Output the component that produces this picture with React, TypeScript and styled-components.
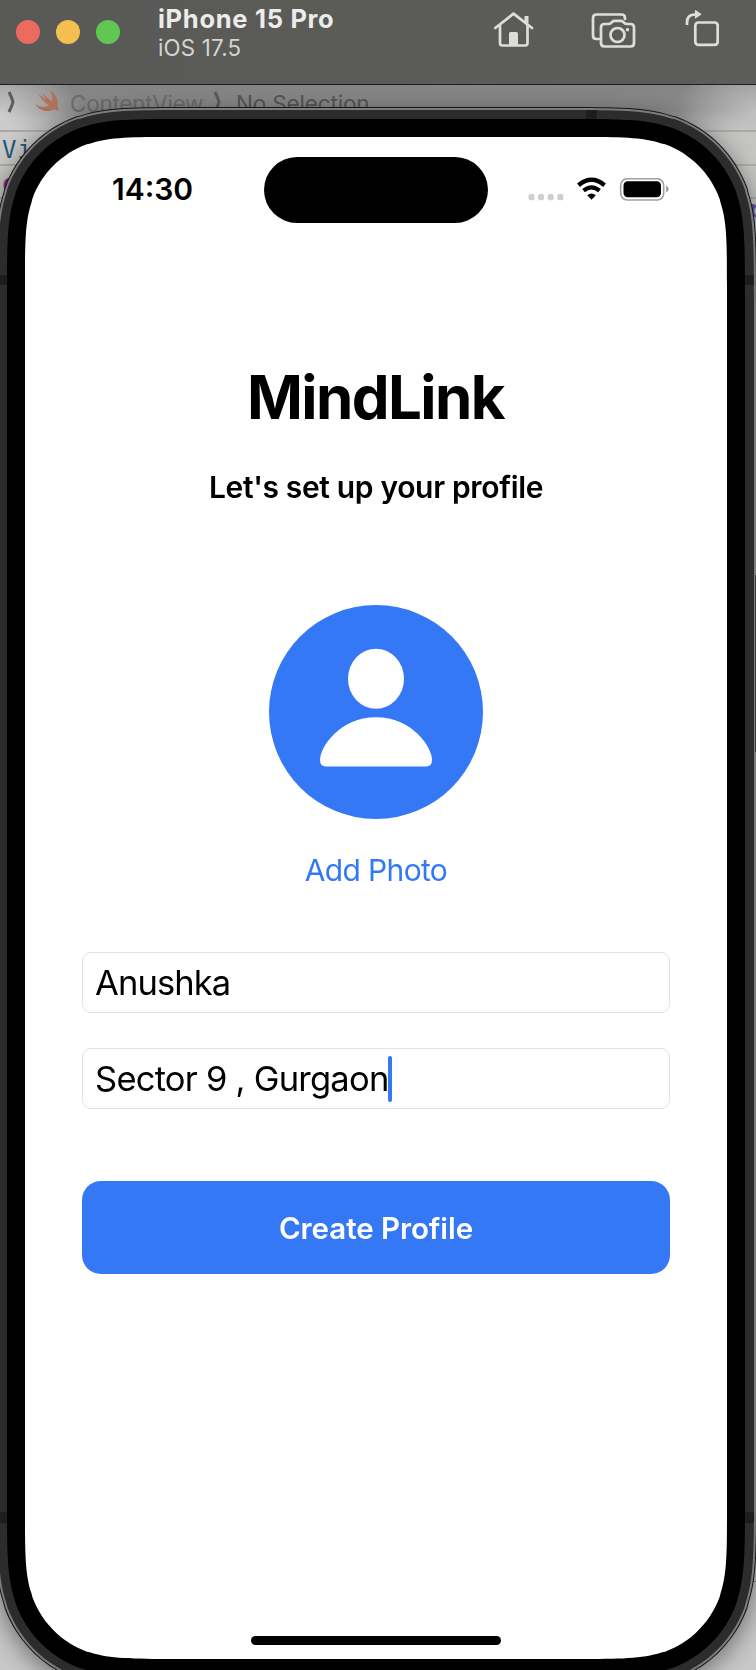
import React from "react";
import styled, { createGlobalStyle } from "styled-components";

const Global = createGlobalStyle`
  *{box-sizing:border-box}
  html,body{margin:0;padding:0;overflow:hidden}
  body{font-family:Inter,"Liberation Sans",sans-serif;background:#c9c9c6}
`;

/* Rounded rectangle with continuous (smoothed) corners. */
const smooth = (w: number, h: number, r: number) => {
  const a = 1.52866 * r, b = 1.08849 * r, c = 0.86841 * r, d = 0.66993 * r, e = 0.06549 * r;
  const f = 0.63149 * r, g = 0.07491 * r, i = 0.37282 * r, j = 0.16905 * r;
  return `path("M${a} 0L${w - a} 0C${w - b} 0 ${w - c} 0 ${w - d} ${e}L${w - f} ${g}C${w - i} ${j} ${w - j} ${i} ${w - g} ${f}L${w - e} ${d}C${w} ${c} ${w} ${b} ${w} ${a}L${w} ${h - a}C${w} ${h - b} ${w} ${h - c} ${w - e} ${h - d}L${w - g} ${h - f}C${w - j} ${h - i} ${w - i} ${h - j} ${w - f} ${h - g}L${w - d} ${h - e}C${w - c} ${h} ${w - b} ${h} ${w - a} ${h}L${a} ${h}C${b} ${h} ${c} ${h} ${d} ${h - e}L${f} ${h - g}C${i} ${h - j} ${j} ${h - i} ${g} ${h - f}L${e} ${h - d}C0 ${h - c} 0 ${h - b} 0 ${h - a}L0 ${a}C0 ${b} 0 ${c} ${e} ${d}L${g} ${f}C${j} ${i} ${i} ${j} ${f} ${g}L${d} ${e}C${c} 0 ${b} 0 ${a} 0Z")`;
};

const Page = styled.div`
  width:756px;height:1670px;overflow:hidden;display:flex;flex-direction:column;
`;
const Toolbar = styled.header`
  flex:none;height:85px;padding:0 37px 0 16px;display:flex;align-items:flex-start;
  background:linear-gradient(90deg,#595a57,#5c5c58);border-bottom:1px solid #1f1c1e;
`;
const Lights = styled.div`display:flex;gap:16px;margin-top:20px;`;
const Light = styled.i<{ $c: string }>`width:24px;height:24px;border-radius:50%;background:${p => p.$c};`;
const Device = styled.div`margin-left:38px;padding-top:3px;flex:1;white-space:nowrap;`;
const DeviceName = styled.div`font-size:25.5px;line-height:31px;font-weight:750;color:#ececea;letter-spacing:.7px;`;
const DeviceOs = styled.div`font-size:22.3px;line-height:28px;color:#d4d4d1;letter-spacing:.2px;`;
const Tools = styled.div`display:flex;padding-top:8px;svg{display:block}`;

const Stage = styled.main`
  flex:1;min-height:0;display:grid;grid-template:1fr / 756px;overflow:hidden;
  > *{grid-area:1 / 1}
`;
const Editor = styled.div`
  display:flex;flex-direction:column;overflow:hidden;
  background:
    radial-gradient(ellipse 80px 60px at 0 30px,rgba(225,225,225,.75),transparent),
    radial-gradient(ellipse 80px 60px at 756px 26px,rgba(225,225,225,.6),transparent),
    linear-gradient(180deg,#858585 0,#898989 24px,#b4b4b2 46px,#c6c6c3 80px,#c8c8c8 100%);
`;
const Crumbs = styled.div`
  flex:none;height:47px;border-bottom:2px solid #a8a8a7;display:flex;align-items:flex-start;
  padding:4px 0 0 6px;font-size:22.5px;line-height:29px;white-space:nowrap;color:#585858;
  svg{display:block}
`;
const Crumb = styled.span<{ $w: number; $faint?: boolean }>`
  width:${p => p.$w}px;color:${p => (p.$faint ? "#6c6c6c" : "#555")};letter-spacing:${p => (p.$faint ? -0.25 : -0.16)}px;
`;
const CodeLine = styled.div<{ $h: number; $lh: number; $c: string; $rule?: boolean; $bold?: boolean; $x: number }>`
  flex:none;height:${p => p.$h}px;text-indent:${p => p.$x}px;font:24px/${p => p.$lh}px "DejaVu Sans Mono",monospace;
  font-weight:${p => (p.$bold ? 700 : 400)};color:${p => p.$c};letter-spacing:1px;white-space:nowrap;
  ${p => p.$rule && "border-bottom:2px solid #adadab;"}
`;
const LowerEditor = styled.div`flex:none;margin-top:1364px;border-top:1px solid #929292;`;

const Shadow = styled.div`
  width:762px;height:1582px;margin:22px 0 0 -5px;
  filter:drop-shadow(0 6px 12px rgba(0,0,0,.45));
`;
const Edge = styled.div`padding:1px;background:#161616;clip-path:${smooth(762, 1582, 128)};`;
const Highlight = styled.div`
  padding:2px;clip-path:${smooth(760, 1580, 127)};
  background:linear-gradient(#3a3a3a,#3a3a3a) 759px 467px/1px 177px no-repeat,#7c7c7c;
`;
const Frame = styled.div`
  padding:9px;clip-path:${smooth(756, 1576, 125)};
  background:
    linear-gradient(#1d1d1d,#1d1d1d) 588px 0/11px 9px no-repeat,
    linear-gradient(#1d1d1d,#1d1d1d) 0 165px/100% 10px no-repeat,
    linear-gradient(#1d1d1d,#1d1d1d) 0 1402px/100% 11px no-repeat,
    #2c2c2c;
`;
const Bezel = styled.div`padding:18px;background:#000;clip-path:${smooth(738, 1558, 116)};`;
const Screen = styled.div`
  width:702px;height:1522px;background:#fff;clip-path:${smooth(702, 1522, 98)};
  display:flex;flex-direction:column;align-items:center;color:#000;padding:20px 57px 14px;
`;
const Status = styled.div`
  width:100%;height:66px;flex:none;display:grid;grid-template-columns:182px 224px 182px;align-items:center;
`;
const Clock = styled.div`padding:0 0 2px 30px;font-size:30px;line-height:36px;font-weight:600;letter-spacing:0;`;
const Island = styled.div`height:66px;border-radius:33px;background:#000;`;
const Signals = styled.div`display:flex;padding:0 0 2px 39px;svg{display:block}`;
const Title = styled.h1`
  margin:134px 0 2px;font-size:60px;line-height:80px;font-weight:700;letter-spacing:-1.6px;text-indent:-1px;white-space:nowrap;
`;
const Subtitle = styled.p`margin:28px 0 2px;font-size:30px;line-height:40px;font-weight:600;letter-spacing:-.34px;white-space:nowrap;`;
const Avatar = styled.div`margin-top:96px;height:214px;svg{display:block}`;
const AddPhoto = styled.button`
  margin:31px 0 1px;padding:0;border:0;background:none;color:#3478f6;font:400 30px/40px Inter,sans-serif;letter-spacing:-.65px;
`;
const Fields = styled.div`width:588px;margin-top:61px;display:flex;flex-direction:column;gap:35px;`;
const Field = styled.div`
  height:61px;border:1px solid #e2e2e2;border-radius:9px;padding:0 12px;display:flex;align-items:center;
  font-size:34.5px;line-height:48px;white-space:nowrap;
`;
const Value = styled.span<{ $ls: number }>`letter-spacing:${p => p.$ls}px;`;
const Caret = styled.i`width:4px;height:46px;border-radius:2px;background:#3478f6;margin-left:-1px;`;
const Create = styled.button`
  width:588px;height:93px;flex:none;margin:72px 0 0;padding:0;border:0;border-radius:19px;background:#3478f6;color:#fff;
  font:600 29.5px/40px Inter,sans-serif;letter-spacing:-.07px;
`;
const HomeBar = styled.div`width:250px;height:9px;border-radius:5px;background:#000;margin-top:auto;flex:none;`;

const ToolIcons = () => (
  <svg width="229" height="44" viewBox="490 8 229 44" fill="none" stroke="#deded9" strokeWidth="2.7" strokeLinecap="round" strokeLinejoin="round">
    <path d="M495.3 28 L513.5 13.7 L532 28" strokeWidth="2.8" />
    <path d="M500 25V43q0 2.500 2.500 2.500H525q2.500 0 2.500-2.500V25" />
    <path d="M526.500 23.500V16" strokeWidth="4" strokeLinecap="butt" />
    <path d="M509 46V33.500q0-1.500 1.500-1.500h6q1.500 0 1.500 1.500V46z" fill="#deded9" stroke="none" />
    <path d="M599 39H596.500q-3.500 0-3.500-3.500V18q0-3.500 3.500-3.500H621.500q3.500 0 3.500 3.500V19" />
    <path d="M605 24h3.500q1.500 0 2.500-1l1.700-1.500q.7-.7 1.700-.7h6.600q1 0 1.700.7l1.700 1.500q1 1 2.500 1H630.500q3.500 0 3.500 3.500V43q0 3.500-3.500 3.500H604.500q-3.500 0-3.500-3.500V27.500q0-3.500 3.500-3.500z" />
    <circle cx="617.500" cy="35" r="7" />
    <circle cx="627.500" cy="29.700" r="1.800" fill="#deded9" stroke="none" />
    <rect x="695.300" y="22.500" width="22.400" height="22.300" rx="3" />
    <path d="M687 25V22.500q0-8 8-8H697" strokeLinecap="butt" />
    <path d="M695.500 10.700L700.700 14.300L695.500 17.800z" fill="#deded9" strokeWidth="1.200" />
  </svg>
);

const StatusIcons = () => (
  <svg width="142" height="30" viewBox="527 174 142 30" fill="none">
    <g fill="#cfcfcf">
      <rect x="528.500" y="194" width="6" height="6.300" rx="1.800" />
      <rect x="538" y="194" width="6" height="6.300" rx="1.800" />
      <rect x="547.700" y="194" width="6" height="6.300" rx="1.800" />
      <rect x="557.300" y="194" width="6" height="6.300" rx="1.800" />
    </g>
    <path d="M578.500 185.200Q591.500 174.500 604.500 185.200" stroke="#000" strokeWidth="4.400" />
    <path d="M583.500 190.700Q591.500 184 599.500 190.700" stroke="#000" strokeWidth="4.200" />
    <path d="M587.200 195.200Q591.500 191.700 595.800 195.200L591.500 199.700z" fill="#000" />
    <rect x="620.700" y="178.700" width="43" height="21.300" rx="6.500" stroke="#a0a0a0" strokeWidth="1.600" />
    <rect x="623.500" y="181.200" width="37.500" height="16" rx="4.200" fill="#000" />
    <path d="M666 185.500q2.700 1 2.700 3.500t-2.700 3.500z" fill="#a0a0a0" />
  </svg>
);

const Person = () => (
  <svg width="214" height="214" viewBox="0 0 214 214">
    <circle cx="107" cy="107" r="107" fill="#3478f6" />
    <ellipse cx="107" cy="73.700" rx="28" ry="30" fill="#fff" />
    <path d="M57 161.500Q51 161.500 51 155C51 142 71 112.300 107 112.300S163 142 163 155Q163 161.500 157 161.500Z" fill="#fff" />
  </svg>
);

const Chevron = () => (
  <svg width="12" height="25" viewBox="0 0 12 25" fill="none" stroke="#5c5c5c" strokeWidth="3"><path d="M3 3Q6 9 7 13Q6 17 3 23" /></svg>
);
const Swift = () => (
  <svg width="26" height="24" viewBox="0 0 26 24" fill="#b07159">
    <path d="M15.500 1C24 7 24.500 13 23.300 16.300C25 18.500 24.500 21.500 24 22C22 19.500 20 20.500 18.500 21C11 24 4 20 1 15C6 18.500 12 18.500 15 16.500C10 13 6 8 4 4.500L12.500 11L7.500 3.500L18 12.500C19 8 17.500 4 15.500 1Z" />
  </svg>
);

export default function App() {
  return (
    <Page>
      <Global />
      <Toolbar>
        <Lights><Light $c="#ed6a5f" /><Light $c="#f5bf4f" /><Light $c="#61c654" /></Lights>
        <Device><DeviceName>iPhone 15 Pro</DeviceName><DeviceOs>iOS 17.5</DeviceOs></Device>
        <Tools><ToolIcons /></Tools>
      </Toolbar>
      <Stage>
        <Editor>
          <Crumbs>
            <Crumb $w={28}><Chevron /></Crumb>
            <Crumb $w={36}><Swift /></Crumb>
            <Crumb $w={142} $faint>ContentView</Crumb>
            <Crumb $w={24}><Chevron /></Crumb>
            <Crumb $w={180}>No Selection</Crumb>
          </Crumbs>
          <CodeLine $h={34} $lh={36} $x={2} $c="#235a7e" $rule>Vi</CodeLine>
          <CodeLine $h={33} $lh={36} $x={-13} $c="#8e2c91" $bold $rule>ne</CodeLine>
          <CodeLine $h={18} $lh={23} $x={749} $c="#6b4fa0" $bold>p</CodeLine>
          <LowerEditor />
        </Editor>
        <Shadow>
          <Edge>
            <Highlight>
              <Frame>
                <Bezel>
                  <Screen>
                    <Status>
                      <Clock>14:30</Clock>
                      <Island />
                      <Signals><StatusIcons /></Signals>
                    </Status>
                    <Title>MindLink</Title>
                    <Subtitle>Let's set up your profile</Subtitle>
                    <Avatar><Person /></Avatar>
                    <AddPhoto>Add Photo</AddPhoto>
                    <Fields>
                      <Field><Value $ls={-0.88}>Anushka</Value></Field>
                      <Field><Value $ls={-0.76}>Sector 9 , Gurgaon</Value><Caret /></Field>
                    </Fields>
                    <Create>Create Profile</Create>
                    <HomeBar />
                  </Screen>
                </Bezel>
              </Frame>
            </Highlight>
          </Edge>
        </Shadow>
      </Stage>
    </Page>
  );
}
